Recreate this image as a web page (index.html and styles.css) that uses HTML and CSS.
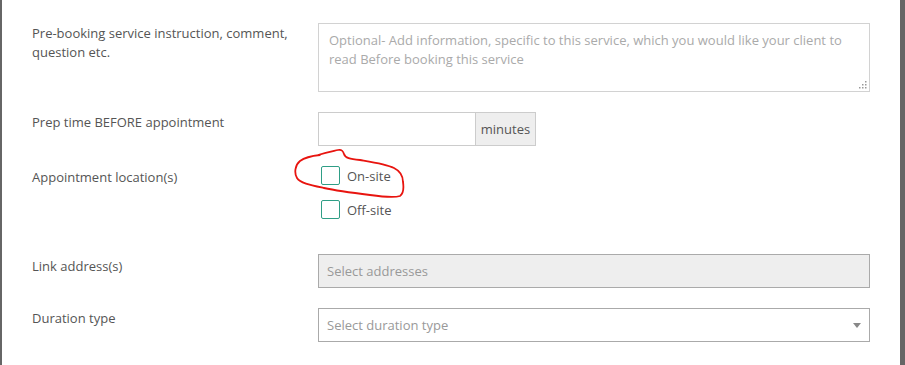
FILE: index.html
```html
<!DOCTYPE html>
<html lang="en">
<head>
  <meta charset="UTF-8">
  <title>Service settings</title>
  <link rel="stylesheet" href="styles.css">
</head>
<body>
  <div class="modal">
    <form class="service-form">
      <!-- pre-booking note -->
      <div class="form-row row-note">
        <label class="row-label">Pre-booking service instruction, comment, question etc.</label>
        <div class="field note-field">
          <textarea class="note-input" placeholder="Optional- Add information, specific to this service, which you would like your client to read Before booking this service"></textarea>
          <svg class="grip" width="9" height="9" viewBox="0 0 9 9">
            <rect x="7" y="1" width="1.5" height="1.5" fill="#999"/>
            <rect x="4" y="4" width="1.5" height="1.5" fill="#999"/>
            <rect x="7" y="4" width="1.5" height="1.5" fill="#999"/>
            <rect x="1" y="7" width="1.5" height="1.5" fill="#999"/>
            <rect x="4" y="7" width="1.5" height="1.5" fill="#999"/>
            <rect x="7" y="7" width="1.5" height="1.5" fill="#999"/>
          </svg>
        </div>
      </div>

      <!-- prep time -->
      <div class="form-row row-prep">
        <label class="row-label">Prep time BEFORE appointment</label>
        <div class="field">
          <div class="input-group">
            <input type="text" class="prep-input">
            <span class="addon">minutes</span>
          </div>
        </div>
      </div>

      <!-- location -->
      <div class="form-row row-location">
        <label class="row-label">Appointment location(s)</label>
        <div class="field checks">
          <label class="check"><span class="box"></span>On-site</label>
          <label class="check"><span class="box"></span>Off-site</label>
          <svg class="scribble" width="120" height="56" viewBox="0 0 120 56">
            <path d="M24 7 C34 4 40 3 44 2 C48 1 49 3 50 6 C51 10 56 11 66 12 C78 14 92 16 100 20 C106 23 109 27 109 34 C110 41 109 46 106 48 C100 50 90 49 76 47 C60 45 44 43 30 40 C16 37 6 35 3 30 C0 25 1 17 6 13 C10 10 16 8 26 7"
                  fill="none" stroke="#e8140f" stroke-width="1.8" stroke-linecap="round"/>
          </svg>
        </div>
      </div>

      <!-- link address -->
      <div class="form-row row-link">
        <label class="row-label">Link address(s)</label>
        <div class="field">
          <div class="select-box disabled">Select addresses</div>
        </div>
      </div>

      <!-- duration -->
      <div class="form-row row-duration">
        <label class="row-label">Duration type</label>
        <div class="field">
          <div class="select-box">Select duration type<span class="arrow"></span></div>
        </div>
      </div>
    </form>
  </div>
</body>
</html>
```

FILE: styles.css
```css
html, body {
  margin: 0;
  padding: 0;
  height: 100%;
  background-color: #666;
  overflow: hidden;
}
body {
  font-family: "Open Sans", "Noto Sans", Arial, sans-serif;
  font-size: 13px;
  color: #555;
}
.modal {
  margin-left: 2px;
  width: 898px;
  height: 100%;
  background-color: #fff;
  position: relative;
}
.service-form {
  padding: 23px 0 0 30px;
}
.form-row {
  display: grid;
  grid-template-columns: 286px 552px;
}
.row-label {
  line-height: 19px;
  padding-right: 20px;
}
.field {
  position: relative;
}

/* note */
.row-note .row-label {
  padding-top: 1px;
}
.note-input {
  display: block;
  box-sizing: border-box;
  width: 552px;
  height: 69px;
  margin: 0;
  padding: 7px 10px;
  border: 1px solid #d2d2d2;
  border-radius: 0;
  resize: none;
  font-family: inherit;
  font-size: 13px;
  line-height: 19px;
  color: #555;
  outline: none;
}
.note-input::placeholder {
  color: #aaa;
}
.grip {
  position: absolute;
  right: 3px;
  bottom: 3px;
}

/* prep time */
.row-prep {
  margin-top: 20px;
}
.row-prep .row-label {
  padding-top: 1px;
}
.input-group {
  display: flex;
  height: 34px;
}
.prep-input {
  box-sizing: border-box;
  width: 157px;
  height: 34px;
  margin: 0;
  border: 1px solid #ccc;
  border-right: none;
  outline: none;
}
.addon {
  box-sizing: border-box;
  width: 61px;
  height: 34px;
  border: 1px solid #ccc;
  background-color: #eee;
  text-align: center;
  line-height: 32px;
  color: #555;
}

/* location */
.row-location {
  margin-top: 20px;
}
.row-location .row-label {
  padding-top: 2px;
}
.checks {
  display: flex;
  flex-direction: column;
  gap: 15px;
}
.check {
  display: flex;
  align-items: center;
  gap: 7px;
  height: 19px;
  padding-left: 3px;
}
.box {
  box-sizing: border-box;
  width: 19px;
  height: 19px;
  border: 1px solid #2f9e86;
  border-radius: 2px;
  background: #fff;
}
.scribble {
  position: absolute;
  left: -24px;
  top: -18px;
}

/* selects */
.row-link {
  margin-top: 35px;
}
.row-link .row-label {
  padding-top: 3px;
}
.row-duration {
  margin-top: 20px;
}
.row-duration .row-label {
  padding-top: 1px;
}
.select-box {
  position: relative;
  box-sizing: border-box;
  height: 34px;
  border: 1px solid #aaa;
  padding-left: 8px;
  line-height: 32px;
  color: #999;
  background-color: #fff;
}
.select-box.disabled {
  background-color: #eee;
}
.arrow {
  position: absolute;
  right: 8px;
  top: 14px;
  width: 0;
  height: 0;
  border-top: 5px solid #888;
  border-left: 4px solid transparent;
  border-right: 4px solid transparent;
}
```
